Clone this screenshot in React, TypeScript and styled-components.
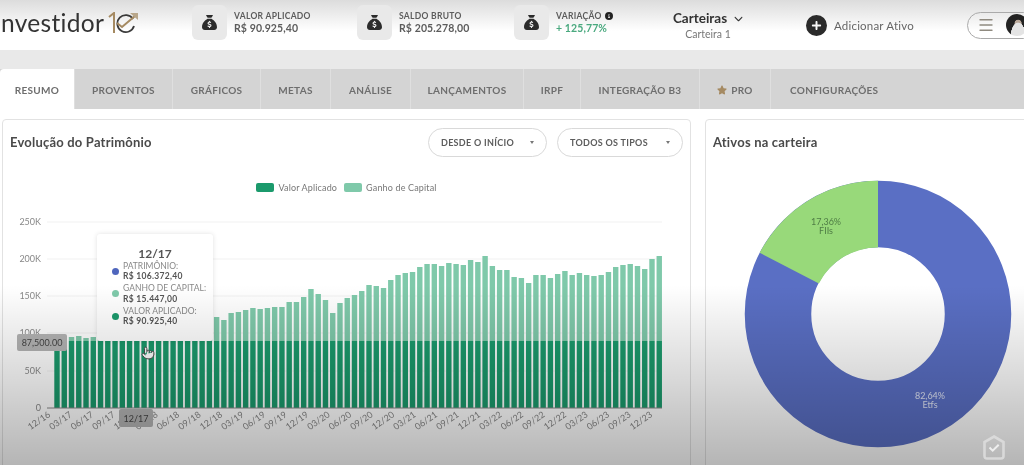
import styled, { createGlobalStyle } from "styled-components";
import { FaChevronDown, FaCircleInfo, FaCirclePlus, FaSackDollar, FaStar } from "react-icons/fa6";
import { Menu, Pointer } from "lucide-react";

const GlobalStyle = createGlobalStyle`
  html, body {
    margin: 0;
    background: #fff;
    overflow: hidden;
  }
  * {
    box-sizing: border-box;
  }
`;

const TABS = [
  { label: "Resumo", width: 75 },
  { label: "Proventos", width: 98 },
  { label: "Gráficos", width: 88 },
  { label: "Metas", width: 70 },
  { label: "Análise", width: 80 },
  { label: "Lançamentos", width: 113 },
  { label: "IRPF", width: 57 },
  { label: "Integração B3", width: 119 },
  { label: "Pro", width: 71, star: true },
  { label: "Configurações", width: 210 },
];

// topo de cada barra, lido do grafico (y da pagina)
const BAR_TOPS = [
  338, 338, 337, 336, 338, 337, 336, 335, 334, 333, 332, 331, 330, 329, 328, 327, 326, 325, 324, 322, 320, 318,
  317, 320, 313, 312, 310, 308, 309, 308, 307, 307, 302, 302, 297, 289, 294, 300, 313, 303, 298,
  295, 291, 285, 286, 288, 280, 275, 273, 272, 267, 264, 264, 266, 263, 264, 265, 260, 262, 256, 266, 270, 270,
  277, 278, 283, 275, 275, 278, 274, 271, 275, 273, 275, 276, 275, 272, 267, 265, 264, 266, 269, 259, 256,
];

const Y_TICKS = [
  { label: "250K", y: 222 },
  { label: "200K", y: 259 },
  { label: "150K", y: 296 },
  { label: "100K", y: 333 },
  { label: "50K", y: 371 },
  { label: "0", y: 408 },
];

const X_LABELS = ["12/16", "03/17", "06/17", "09/17", "12/17", "03/18", "06/18", "09/18", "12/18", "03/19", "06/19", "09/19", "12/19", "03/20", "06/20", "09/20", "12/20", "03/21", "06/21", "09/21", "12/21", "03/22", "06/22", "09/22", "12/22", "03/23", "06/23", "09/23", "12/23"];

const APPLIED_TOP = 341;
const AXIS_Y = 408;

const Page = styled.div`
  position: relative;
  width: 1024px;
  height: 465px;
  overflow: hidden;
  background: #fff;
  font-family: Lato, "Open Sans", sans-serif;
  color: #444;
  filter: blur(0.35px);
`;

const Header = styled.header`
  display: flex;
  align-items: center;
  height: 50px;
  background: linear-gradient(#dcdcdc, #fff 62%);
  box-shadow: 0 1px 3px rgba(0, 0, 0, 0.15);
`;

const Logo = styled.div`
  display: flex;
  flex: none;
  align-items: center;
  gap: 4px;
  width: 198px;
  margin-left: -6px;
  margin-top: -5px;
  font-size: 24.5px;
  letter-spacing: 0.3px;
  color: #333;
`;

const Stat = styled.div<{ $width: number }>`
  display: flex;
  flex: none;
  align-items: center;
  gap: 7px;
  width: ${(p) => p.$width}px;
  margin-top: -6px;
`;

const IconBox = styled.div`
  display: flex;
  align-items: center;
  justify-content: center;
  width: 35px;
  height: 35px;
  border-radius: 6px;
  background: #e9e9e9;
  color: #2b2b2b;
  font-size: 15px;
`;

const StatText = styled.div`
  display: flex;
  flex-direction: column;
  gap: 1px;
`;

const StatLabel = styled.span`
  display: flex;
  align-items: center;
  gap: 3px;
  font-size: 8.5px;
  font-weight: 700;
  letter-spacing: 0.3px;
  color: #5c5c5c;
  text-transform: uppercase;
`;

const StatValue = styled.span<{ $positive?: boolean }>`
  font-size: 10.5px;
  font-weight: 700;
  letter-spacing: 0.1px;
  color: ${(p) => (p.$positive ? "#4aa97f" : "#5c5c5c")};
`;

const Wallet = styled.div`
  display: flex;
  flex: none;
  flex-direction: column;
  align-items: center;
  gap: 2px;
  width: 78px;
  margin-right: 59px;
`;

const WalletTitle = styled.span`
  display: flex;
  align-items: center;
  gap: 7px;
  font-size: 13.5px;
  font-weight: 700;
  color: #333;
  white-space: nowrap;
`;

const WalletName = styled.span`
  font-size: 10.5px;
  color: #777;
`;

const AddAsset = styled.div`
  display: flex;
  flex: none;
  align-items: center;
  gap: 7px;
  width: 161px;
  font-size: 11.5px;
  letter-spacing: 0.2px;
  color: #666;
  white-space: nowrap;
  svg {
    font-size: 21px;
    color: #2b2b2b;
  }
`;

const UserPill = styled.div`
  display: flex;
  flex: none;
  align-items: center;
  gap: 11px;
  width: 70px;
  height: 27px;
  padding-left: 9px;
  border: 1px solid #aaa;
  border-radius: 14px;
  color: #8f8a80;
`;

const Avatar = styled.div`
  flex: none;
  width: 22px;
  height: 22px;
  border-radius: 50%;
  background: radial-gradient(ellipse at 55% 100%, #e4e4e4 0 42%, transparent 44%), radial-gradient(circle at 55% 42%, #b9a89a 0 18%, #222 22%);
`;

const Band = styled.div`
  height: 19px;
  background: #e9e9e9;
`;

const TabBar = styled.nav`
  display: flex;
  height: 40px;
  background: #d4d4d4;
`;

const Tab = styled.div<{ $width: number; $active?: boolean }>`
  display: flex;
  align-items: center;
  justify-content: ${(p) => (p.$width > 200 ? "flex-start" : "center")};
  gap: 4px;
  width: ${(p) => p.$width}px;
  padding-top: 1px;
  padding-left: ${(p) => (p.$width > 200 ? "19px" : "0")};
  border-right: ${(p) => (p.$width > 200 ? "none" : "1px solid #dfdfdf")};
  border-radius: ${(p) => (p.$active ? "4px 0 0 0" : "0")};
  background: ${(p) => (p.$active ? "#fff" : "transparent")};
  font-size: 10px;
  font-weight: 700;
  letter-spacing: 0.3px;
  color: #6e6e6e;
  text-transform: uppercase;
  svg {
    color: #a58a62;
  }
`;

const Content = styled.main`
  display: flex;
  gap: 14px;
  padding: 10px 0 0 2px;
`;

const Card = styled.section<{ $width: number }>`
  flex: none;
  width: ${(p) => p.$width}px;
  height: 400px;
  border: 1px solid #e2e2e2;
  border-radius: 4px;
  background: #fff;
`;

const CardHead = styled.div`
  display: flex;
  align-items: center;
  height: 44px;
  padding: 0 7px;
`;

const CardTitle = styled.h2`
  flex: 1;
  margin: 0;
  font-size: 13px;
  font-weight: 700;
  letter-spacing: 0.2px;
  color: #4a4a4a;
`;

const Select = styled.div<{ $width: number }>`
  display: flex;
  align-items: center;
  justify-content: space-between;
  width: ${(p) => p.$width}px;
  height: 29px;
  margin-left: 10px;
  padding: 0 12px;
  border: 1px solid #d9d9d9;
  border-radius: 15px;
  font-size: 9px;
  font-weight: 700;
  letter-spacing: 0.3px;
  color: #5c5c5c;
  text-transform: uppercase;
`;

const Caret = styled.span`
  width: 0;
  height: 0;
  border-left: 2.5px solid transparent;
  border-right: 2.5px solid transparent;
  border-top: 3px solid #777;
`;

const Legend = styled.div`
  display: flex;
  justify-content: center;
  gap: 7px;
  height: 23px;
  margin-top: 18px;
`;

const LegendItem = styled.span`
  display: flex;
  align-items: center;
  gap: 4px;
  height: 10px;
  font-size: 9px;
  letter-spacing: 0.15px;
  color: #777;
`;

const Swatch = styled.i<{ $color: string }>`
  width: 18px;
  height: 9px;
  border-radius: 2px;
  background: ${(p) => p.$color};
`;

const ChartArea = styled.div`
  position: relative;
  height: 255px;
`;

const ChartSvg = styled.svg`
  display: block;
  text {
    font-family: Lato, "Open Sans", sans-serif;
    font-size: 9px;
    fill: #888;
  }
`;

const Tooltip = styled.div`
  position: absolute;
  left: 94px;
  top: 29px;
  width: 116px;
  height: 107px;
  padding-top: 14px;
  border-radius: 3px;
  background: #fff;
  box-shadow: 0 0 5px rgba(0, 0, 0, 0.12);
`;

const TooltipTitle = styled.div`
  font-size: 12px;
  font-weight: 700;
  line-height: 12px;
  text-align: center;
  color: #555;
`;

const TooltipRow = styled.div`
  display: flex;
  align-items: center;
  gap: 4px;
  height: 22.5px;
  padding-left: 15px;
`;

const TooltipDot = styled.i<{ $color: string }>`
  flex: none;
  width: 7px;
  height: 7px;
  border-radius: 50%;
  background: ${(p) => p.$color};
`;

const TooltipText = styled.div`
  font-size: 8.5px;
  line-height: 10.5px;
  color: #888;
  white-space: nowrap;
  b {
    display: block;
    letter-spacing: 0.3px;
    color: #555;
  }
`;

const AxisTag = styled.span`
  position: absolute;
  display: flex;
  align-items: center;
  justify-content: center;
  border-radius: 2px;
  background: #b4b4b4;
  font-size: 9px;
  color: #444;
`;

const ValueTag = styled(AxisTag)`
  left: 14px;
  top: 129px;
  width: 50px;
  height: 17px;
`;

const DateTag = styled(AxisTag)`
  left: 116px;
  top: 204px;
  width: 34px;
  height: 18px;
`;

const HandCursor = styled.div`
  position: absolute;
  left: 138px;
  top: 139px;
  color: #444;
  svg {
    fill: #fff;
  }
`;

const DonutWrap = styled.div`
  display: flex;
  justify-content: center;
  margin-top: 15px;
  margin-left: 7px;
  width: 330px;
`;

const DonutSvg = styled.svg`
  display: block;
  text {
    font-family: Lato, "Open Sans", sans-serif;
    font-size: 9px;
    text-anchor: middle;
  }
`;

const Watermark = styled.svg`
  position: absolute;
  right: 19px;
  bottom: 5px;
`;

const Fade = styled.div`
  position: absolute;
  left: 0;
  right: 0;
  bottom: 0;
  height: 180px;
  background: linear-gradient(rgba(0, 0, 0, 0), rgba(0, 0, 0, 0.29));
  pointer-events: none;
`;

function LogoMark() {
  return (
    <svg width="31" height="22" viewBox="0 0 31 22" fill="none">
      <path d="M1 5 L6 1 V21" stroke="#a58a62" strokeWidth="2" />
      <path d="M25 7 A8.5 8.5 0 1 0 26 14" stroke="#3a3a3a" strokeWidth="1.8" />
      <path d="M9 11 l5 4 L27 4" stroke="#a58a62" strokeWidth="2" />
      <path d="M22 1 h8 v7 Z" fill="#b8a68a" />
    </svg>
  );
}

function BarChart() {
  return (
    <ChartSvg width="688" height="255" viewBox="2 205 688 255">
      {Y_TICKS.map((t) => (
        <g key={t.label}>
          {t.y !== AXIS_Y && <line x1="46" x2="661" y1={t.y} y2={t.y} stroke="#f1f1f1" />}
          <text x="40" y={t.y + 3} textAnchor="end">
            {t.label}
          </text>
        </g>
      ))}
      {BAR_TOPS.map((top, i) => {
        const x = 53.3 + i * 7.256;
        return (
          <g key={i}>
            <rect x={x} y={top} width="5.4" height={APPLIED_TOP - top} fill="#7fc9aa" />
            <rect x={x} y={APPLIED_TOP} width="5.4" height={AXIS_Y - APPLIED_TOP} fill="#1b9a6c" />
          </g>
        );
      })}
      <line x1="46" x2="661" y1={AXIS_Y} y2={AXIS_Y} stroke="#888" />
      {X_LABELS.map((label, i) => (
        <text key={label} x={50 + i * 21.5} y="416" textAnchor="end" transform={`rotate(-35 ${50 + i * 21.5} 416)`}>
          {label}
        </text>
      ))}
    </ChartSvg>
  );
}

function Donut() {
  return (
    <DonutSvg width="270" height="270" viewBox="-135 -135 270 270">
      <circle r="100" fill="none" stroke="#5a6fc4" strokeWidth="66.5" />
      <path d="M0 -133.2 A133.2 133.2 0 0 0 -118.3 -61.2 L-59.1 -30.6 A66.6 66.6 0 0 1 0 -66.6 Z" fill="#98d97a" />
      <text x="-52" y="-89" fill="#4f7d45">17,36%</text>
      <text x="-52" y="-80" fill="#4f7d45">FIIs</text>
      <text x="52" y="85" fill="#dfe4f5">82,64%</text>
      <text x="52" y="94" fill="#dfe4f5">Etfs</text>
    </DonutSvg>
  );
}

export default function App() {
  return (
    <Page>
      <GlobalStyle />
      <Header>
        <Logo>
          Investidor
          <LogoMark />
        </Logo>
        <Stat $width={165}>
          <IconBox>
            <FaSackDollar />
          </IconBox>
          <StatText>
            <StatLabel>Valor aplicado</StatLabel>
            <StatValue>R$ 90.925,40</StatValue>
          </StatText>
        </Stat>
        <Stat $width={157}>
          <IconBox>
            <FaSackDollar />
          </IconBox>
          <StatText>
            <StatLabel>Saldo bruto</StatLabel>
            <StatValue>R$ 205.278,00</StatValue>
          </StatText>
        </Stat>
        <Stat $width={155}>
          <IconBox>
            <FaSackDollar />
          </IconBox>
          <StatText>
            <StatLabel>
              Variação <FaCircleInfo size={8} color="#222" />
            </StatLabel>
            <StatValue $positive>+ 125,77%</StatValue>
          </StatText>
        </Stat>
        <Wallet>
          <WalletTitle>
            Carteiras <FaChevronDown size={9} />
          </WalletTitle>
          <WalletName>Carteira 1</WalletName>
        </Wallet>
        <AddAsset>
          <FaCirclePlus />
          Adicionar Ativo
        </AddAsset>
        <UserPill>
          <Menu size={18} strokeWidth={1.8} />
          <Avatar />
        </UserPill>
      </Header>
      <Band />
      <TabBar>
        {TABS.map((tab, i) => (
          <Tab key={tab.label} $width={tab.width} $active={i === 0}>
            {tab.star && <FaStar size={10} />}
            {tab.label}
          </Tab>
        ))}
      </TabBar>
      <Content>
        <Card $width={689}>
          <CardHead>
            <CardTitle>Evolução do Patrimônio</CardTitle>
            <Select $width={119}>
              Desde o início <Caret />
            </Select>
            <Select $width={126}>
              Todos os tipos <Caret />
            </Select>
          </CardHead>
          <Legend>
            <LegendItem>
              <Swatch $color="#1b9a6c" />
              Valor Aplicado
            </LegendItem>
            <LegendItem>
              <Swatch $color="#7fc9aa" />
              Ganho de Capital
            </LegendItem>
          </Legend>
          <ChartArea>
            <BarChart />
            <Tooltip>
              <TooltipTitle>12/17</TooltipTitle>
              <TooltipRow>
                <TooltipDot $color="#4f66bd" />
                <TooltipText>
                  PATRIMÔNIO:
                  <b>R$ 106.372,40</b>
                </TooltipText>
              </TooltipRow>
              <TooltipRow>
                <TooltipDot $color="#7fc9aa" />
                <TooltipText>
                  GANHO DE CAPITAL:
                  <b>R$ 15.447,00</b>
                </TooltipText>
              </TooltipRow>
              <TooltipRow>
                <TooltipDot $color="#1b9a6c" />
                <TooltipText>
                  VALOR APLICADO:
                  <b>R$ 90.925,40</b>
                </TooltipText>
              </TooltipRow>
            </Tooltip>
            <ValueTag>87,500.00</ValueTag>
            <DateTag>12/17</DateTag>
            <HandCursor>
              <Pointer size={14} strokeWidth={1.5} />
            </HandCursor>
          </ChartArea>
        </Card>
        <Card $width={330}>
          <CardHead>
            <CardTitle>Ativos na carteira</CardTitle>
          </CardHead>
          <DonutWrap>
            <Donut />
          </DonutWrap>
        </Card>
      </Content>
      <Fade />
      <Watermark width="22" height="25" viewBox="0 0 22 25" fill="none">
        <path d="M11 1.5 L20.5 7 V21 Q20.5 23.5 18 23.5 H4 Q1.5 23.5 1.5 21 V7 Z" stroke="#dedede" strokeWidth="2.6" opacity="0.85" />
        <path d="M6.5 12.5 l3.2 3.2 l6 -6" stroke="#eeeeee" strokeWidth="2" />
      </Watermark>
    </Page>
  );
}
